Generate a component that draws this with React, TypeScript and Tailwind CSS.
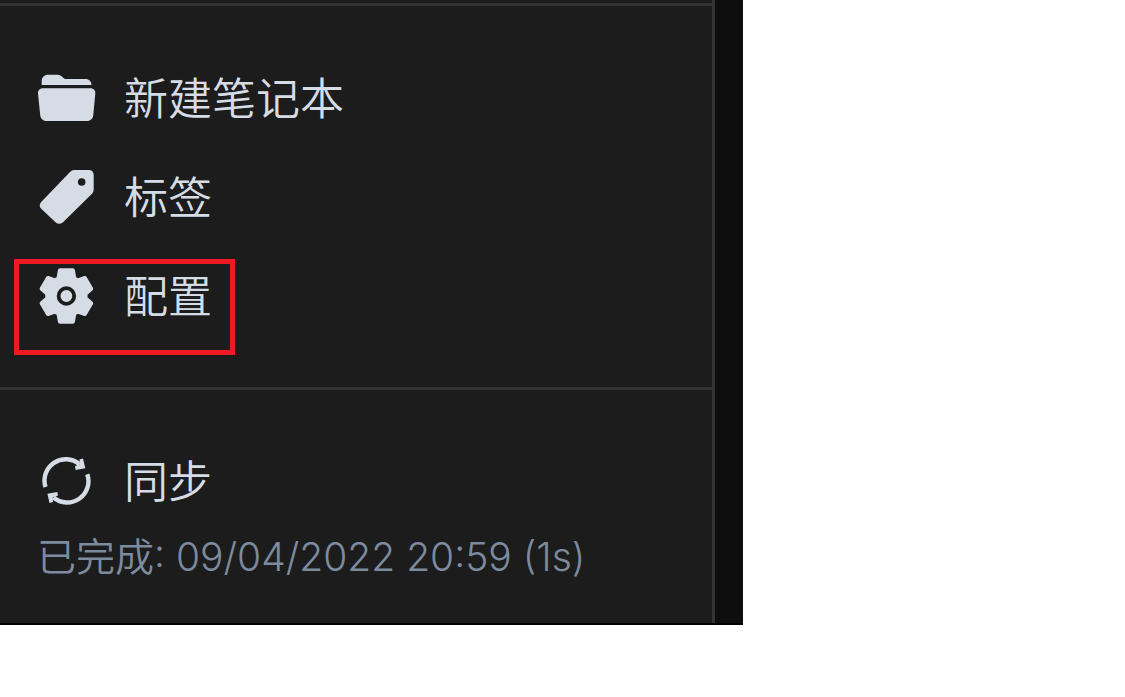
import type { ReactNode } from "react";

interface SidebarButtonProps {
  label: string;
  icon: ReactNode;
  highlighted?: boolean;
}

const iconClass = "size-[60px] shrink-0 fill-current";

function FolderIcon() {
  return (
    <svg viewBox="0 0 60 60" className={iconClass} aria-hidden="true">
      <path d="M5.7 17V13C5.7 9.5 8.5 6.8 12 6.8H22C24.5 6.8 26 9 29 11H49.5C53 11 55.5 13.5 55.5 17Z" />
      <path d="M7 20.3H54.5C57.5 20.3 59.6 22.4 59.3 25.5L57.3 47C57 50.5 54.5 53 51 53H10.5C7 53 4.5 50.5 4.2 47L2 25.5C1.8 22.4 4 20.3 7 20.3Z" />
    </svg>
  );
}

function TagIcon() {
  return (
    <svg viewBox="0 0 60 60" className={iconClass} aria-hidden="true">
      <path
        fillRule="evenodd"
        d="M38 3H52.5Q57.7 3 57.7 8.2V22.5Q57.7 25 56 26.7L27 55.2Q23 58.5 19.5 55.2L5.2 41.8Q2.2 38.5 5.2 35L34 5Q35.8 3 38 3ZM45.7 11.2A3.8 3.8 0 1 0 45.7 18.8A3.8 3.8 0 1 0 45.7 11.2Z"
      />
    </svg>
  );
}

function GearIcon() {
  return (
    <svg viewBox="-30.4 -30 60 60" className={iconClass} aria-hidden="true">
      <path
        stroke="currentColor"
        strokeWidth="4"
        strokeLinejoin="round"
        d="M-6.5 -25.7H6.5L8 -17.5L11.5 -15.5L18.5 -18L24.8 -7.2L19.2 -2.2V2.2L24.8 7.2L18.5 18L11.5 15.5L8 17.5L6.5 25.7H-6.5L-8 17.5L-11.5 15.5L-18.5 18L-24.8 7.2L-19.2 2.2V-2.2L-24.8 -7.2L-18.5 -18L-11.5 -15.5L-8 -17.5Z"
      />
      <circle r="7.8" fill="none" stroke="#1c1c1c" strokeWidth="3.8" />
    </svg>
  );
}

function SyncIcon() {
  return (
    <svg viewBox="0 0 60 60" className={iconClass} aria-hidden="true">
      <g fill="none" stroke="currentColor" strokeWidth="4.4">
        <path d="M9.5 36A21.3 21.3 0 0 1 43.5 13.2" />
        <path d="M51.3 23.2A21.3 21.3 0 0 1 17.5 46.5" />
      </g>
      <path d="M43.5 8.5L47 7.6L49.3 17.3L39.6 18.9L39 15.3L44 13Z" />
      <path d="M17 51L13.5 52L11.4 42.8L21.3 41L22 44.6L16.8 46.3Z" />
    </svg>
  );
}

function SidebarButton({ label, icon, highlighted }: SidebarButtonProps) {
  return (
    <button
      type="button"
      className="relative flex h-[99px] w-full items-center gap-7 pl-9 text-left font-['Lato','Noto_Sans_CJK_SC',sans-serif] text-[44px] leading-[46px]"
    >
      {icon}
      <span>{label}</span>
      {highlighted && (
        <span className="pointer-events-none absolute left-3.5 top-[13px] h-24 w-[221px] border-5 border-[#f01b22]" />
      )}
    </button>
  );
}

export default function App() {
  return (
    <main className="flex w-full max-w-[743px] border-b-2 border-black bg-[#0e0e0e] font-['Inter','Noto_Sans_CJK_SC',sans-serif] font-[350] text-[#d6dce6]">
      <nav className="min-w-0 flex-1 border-r-3 border-[#333333] bg-[#1c1c1c] pt-[3px]">
        <div className="border-y-3 border-[#333333] py-[42px]">
          <SidebarButton label="新建笔记本" icon={<FolderIcon />} />
          <SidebarButton label="标签" icon={<TagIcon />} />
          <SidebarButton label="配置" icon={<GearIcon />} highlighted />
        </div>

        <div className="pt-[41px] pb-[39px]">
          <SidebarButton label="同步" icon={<SyncIcon />} />
          <p className="pl-[37px] text-[39px] leading-[54px] whitespace-nowrap text-[#7d8b9f]">
            已完成: 09/04/2022 20:59 (1s)
          </p>
        </div>
      </nav>
      <div className="w-7 shrink-0" />
    </main>
  );
}
